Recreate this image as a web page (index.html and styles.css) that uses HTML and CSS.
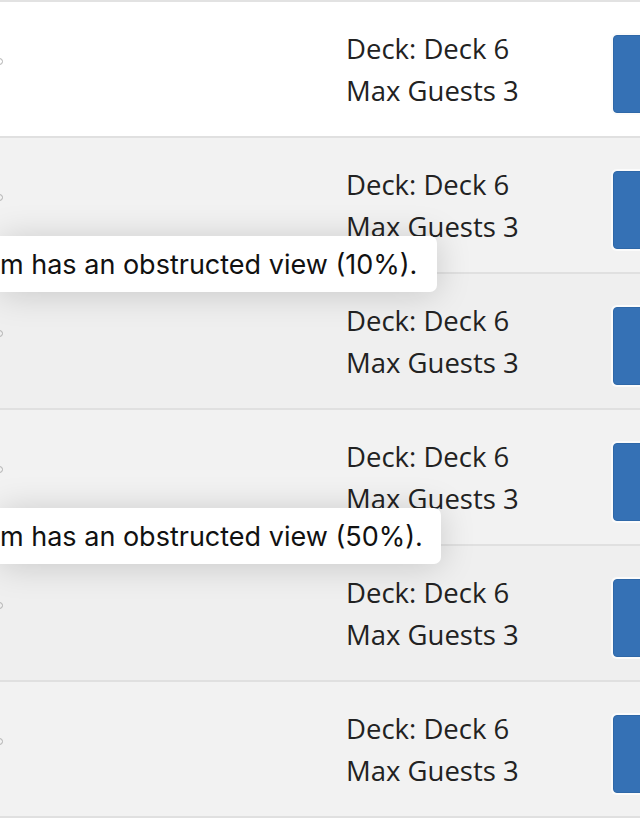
FILE: index.html
```html
<!DOCTYPE html>
<html>
<head>
<meta charset="utf-8">
<link rel="stylesheet" href="styles.css">
</head>
<body>
<div class="list">
  <div class="row row-white">
    <span class="edge-mark"></span>
    <div class="info"><div>Deck: Deck 6</div><div>Max Guests 3</div></div>
    <button class="select-btn" type="button"></button>
  </div>
  <div class="row">
    <span class="edge-mark"></span>
    <div class="info"><div>Deck: Deck 6</div><div>Max Guests 3</div></div>
    <button class="select-btn" type="button"></button>
    <div class="tooltip tip-a">m has an obstructed view (10%).</div>
  </div>
  <div class="row row-alt">
    <span class="edge-mark"></span>
    <div class="info"><div>Deck: Deck 6</div><div>Max Guests 3</div></div>
    <button class="select-btn" type="button"></button>
  </div>
  <div class="row">
    <span class="edge-mark"></span>
    <div class="info"><div>Deck: Deck 6</div><div>Max Guests 3</div></div>
    <button class="select-btn" type="button"></button>
    <div class="tooltip tip-b">m has an obstructed view (50%).</div>
  </div>
  <div class="row row-alt">
    <span class="edge-mark"></span>
    <div class="info"><div>Deck: Deck 6</div><div>Max Guests 3</div></div>
    <button class="select-btn" type="button"></button>
  </div>
  <div class="row">
    <span class="edge-mark"></span>
    <div class="info"><div>Deck: Deck 6</div><div>Max Guests 3</div></div>
    <button class="select-btn" type="button"></button>
  </div>
</div>
</body>
</html>
```

FILE: styles.css
```css
html, body {
  margin: 0;
  padding: 0;
  background: #ffffff;
  overflow: hidden;
}

.list {
  border-top: 2px solid #e2e2e2;
  font-family: "Open Sans", "Noto Sans", sans-serif;
  color: #222222;
}

.row {
  position: relative;
  height: 134px;
  border-bottom: 2px solid #e0e0e0;
  background: #f2f2f2;
  display: flex;
  align-items: center;
  padding-left: 346px;
  box-sizing: content-box;
  overflow: visible;
}

.row-white {
  background: #ffffff;
}

.row-alt {
  background: #efefef;
}

.edge-mark {
  position: absolute;
  left: -4px;
  top: 56px;
  width: 5px;
  height: 5px;
  border: 1px solid #b0b0b0;
  border-radius: 50%;
}

.info {
  flex: none;
  width: 267px;
  font-size: 27.5px;
  line-height: 42px;
  margin-top: 2px;
  white-space: nowrap;
}

.select-btn {
  flex: none;
  width: 40px;
  height: 78px;
  margin-top: 9px;
  padding: 0;
  border: 1px solid #2f68a8;
  border-radius: 4px;
  background: #3571b5;
  box-shadow: 0 0 0 2px #fbfbfb;
}

.tooltip {
  position: absolute;
  left: 0;
  z-index: 2;
  height: 56px;
  display: flex;
  align-items: center;
  background: #ffffff;
  border-radius: 0 7px 7px 0;
  box-shadow: 0 2px 34px rgba(0, 0, 0, 0.17);
  font-family: Inter, "Liberation Sans", sans-serif;
  font-size: 27px;
  color: #111111;
  box-sizing: border-box;
  white-space: nowrap;
}

.tip-a {
  top: 98px;
  width: 437px;
}

.tip-b {
  top: 98px;
  width: 441px;
}
```
